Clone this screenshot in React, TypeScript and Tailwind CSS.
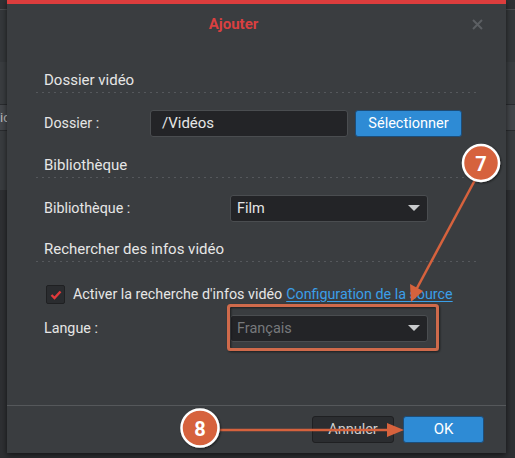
const font = { fontFamily: 'Roboto, "Liberation Sans", sans-serif' };

function Caret() {
  return (
    <svg width="12" height="7" viewBox="0 0 12 7" className="shrink-0">
      <path d="M0 0 L12 0 L6 6 Z" fill="#c9cbcd" />
    </svg>
  );
}

function SectionTitle({ children }: { children: string }) {
  return (
    <div>
      <div className="h-[22px] pl-[8px] text-[15px] leading-[20px] text-[#e6e6e6]">{children}</div>
      <div className="h-px bg-[linear-gradient(to_right,#55585c_2px,transparent_2px)] bg-[length:6px_1px] bg-repeat-x" />
    </div>
  );
}

function Select({ value, disabled }: { value: string; disabled?: boolean }) {
  return (
    <div className="flex h-[27px] w-[198px] items-center justify-between rounded-[3px] border border-[#4a4d50] bg-[#232427] pl-[6px] pr-[7px]">
      <span className={disabled ? 'text-[14.5px] text-[#77797c]' : 'text-[14.5px] text-[#e6e6e6]'}>{value}</span>
      <Caret />
    </div>
  );
}

function Annotations() {
  const c = '#d6623d';
  return (
    <svg className="pointer-events-none absolute inset-0" width="515" height="458" viewBox="0 0 515 458">
      <defs>
        <filter id="sh" x="-30%" y="-30%" width="160%" height="160%">
          <feDropShadow dx="1" dy="1" stdDeviation="1.2" floodColor="#000" floodOpacity="0.55" />
        </filter>
      </defs>
      {/* cadre autour de Langue */}
      <rect x="228.5" y="305.5" width="209" height="44" rx="2" fill="none" stroke="#cf6a4b" strokeWidth="3" filter="url(#sh)" />
      {/* fleche 7 */}
      <line x1="475" y1="180" x2="416" y2="290" stroke={c} strokeWidth="2.5" />
      <path d="M411 302 L410 284 L423 291 Z" fill={c} />
      {/* fleche 8 */}
      <line x1="218" y1="430" x2="392" y2="430" stroke={c} strokeWidth="2.5" />
      <path d="M404 430 L387 423 L387 437 Z" fill={c} />
      {/* pastilles */}
      <g filter="url(#sh)">
        <circle cx="481" cy="163" r="18" fill={c} stroke="#fff" strokeWidth="2.5" />
        <circle cx="200" cy="428" r="18.5" fill={c} stroke="#fff" strokeWidth="2.5" />
      </g>
      <text x="481" y="170.5" textAnchor="middle" fontSize="20" fontWeight="700" fill="#fff" style={font}>7</text>
      <text x="200" y="435.5" textAnchor="middle" fontSize="20" fontWeight="700" fill="#fff" style={font}>8</text>
    </svg>
  );
}

export default function App() {
  return (
    <div className="relative h-[458px] w-[515px] overflow-hidden bg-[#2c2e31]" style={font}>
      {/* page derriere la fenetre */}
      <div className="flex flex-col">
        <div className="h-[10px] border-b border-[#4a4d50] bg-[#2f3134]" />
        <div className="h-[52px] bg-[#35383b]" />
        <div className="h-[43px] border-b border-[#2a2c2f] bg-[#3a3d40]" />
        <div className="flex h-[25px] items-center bg-[#43464a] text-[13px] text-[#bbb]">ic</div>
        <div className="h-[60px] border-t border-[#2a2c2f] bg-[#393c3f]" />
        <div className="h-[267px] bg-[#2e3033]" />
      </div>

      {/* fenetre Ajouter */}
      <div className="absolute left-[7px] top-0 flex h-[453px] w-[499px] flex-col bg-[#3a3d40] shadow-[0_2px_6px_rgba(0,0,0,0.6)]">
        <div className="h-[4px] bg-[#dc3d3d]" />
        <div className="relative flex h-[40px] items-center justify-center pr-[46px]">
          <span className="text-[15px] font-bold text-[#d94040]">Ajouter</span>
          <svg className="absolute right-[23px] top-[15px]" width="11" height="11" viewBox="0 0 11 11">
            <path d="M1 1 L10 10 M10 1 L1 10" stroke="#5c5f63" strokeWidth="2" />
          </svg>
        </div>

        <div className="flex flex-1 flex-col pl-[29px] pr-[26px] text-[14.3px] text-[#e6e6e6]">
          <div className="mt-[26px]">
            <SectionTitle>Dossier vidéo</SectionTitle>
          </div>
          <div className="mt-[17px] flex items-center pl-[8px]">
            <span className="w-[106px]">Dossier :</span>
            <div className="flex h-[27px] w-[198px] items-center rounded-[3px] border border-[#4a4d50] bg-[#232427] pl-[11px] text-[15px]">/Vidéos</div>
            <button className="ml-[7px] h-[27px] w-[107px] rounded-[3px] border border-[#1d4d78] bg-[#2e8bd5] text-[14.5px] text-white">Sélectionner</button>
          </div>

          <div className="mt-[18px]">
            <SectionTitle>Bibliothèque</SectionTitle>
          </div>
          <div className="mt-[17px] flex items-center pl-[8px]">
            <span className="w-[186px]">Bibliothèque :</span>
            <Select value="Film" />
          </div>

          <div className="mt-[17px]">
            <SectionTitle>Rechercher des infos vidéo</SectionTitle>
          </div>
          <div className="mt-[22px] flex items-center pl-[10px]">
            <div className="flex h-[19px] w-[19px] items-center justify-center rounded-[2px] border border-[#1f2022] bg-[#2a2c2f]">
              <svg width="12" height="10" viewBox="0 0 12 10">
                <path d="M1.5 5 L4.5 8 L10.5 1.5" fill="none" stroke="#e0393b" strokeWidth="2.4" />
              </svg>
            </div>
            <span className="ml-[8px]">Activer la recherche d'infos vidéo</span>
            <span className="ml-[4px] text-[#3b9fe8] underline underline-offset-2">Configuration de la source</span>
          </div>
          <div className="mt-[10px] flex items-center pl-[8px]">
            <span className="w-[186px]">Langue :</span>
            <Select value="Français" disabled />
          </div>
        </div>

        <div className="flex h-[48px] justify-end gap-[9px] border-t border-[#55585b] pr-[22px] pt-[10px]">
          <button className="h-[27px] w-[82px] rounded-[3px] border border-[#1f2022] bg-[#2b2d30] text-[14.5px] text-[#d0d0d0]">Annuler</button>
          <button className="h-[27px] w-[81px] rounded-[3px] border border-[#1d4d78] bg-[#2e8bd5] text-[15px] text-white">OK</button>
        </div>
      </div>

      <Annotations />
    </div>
  );
}
